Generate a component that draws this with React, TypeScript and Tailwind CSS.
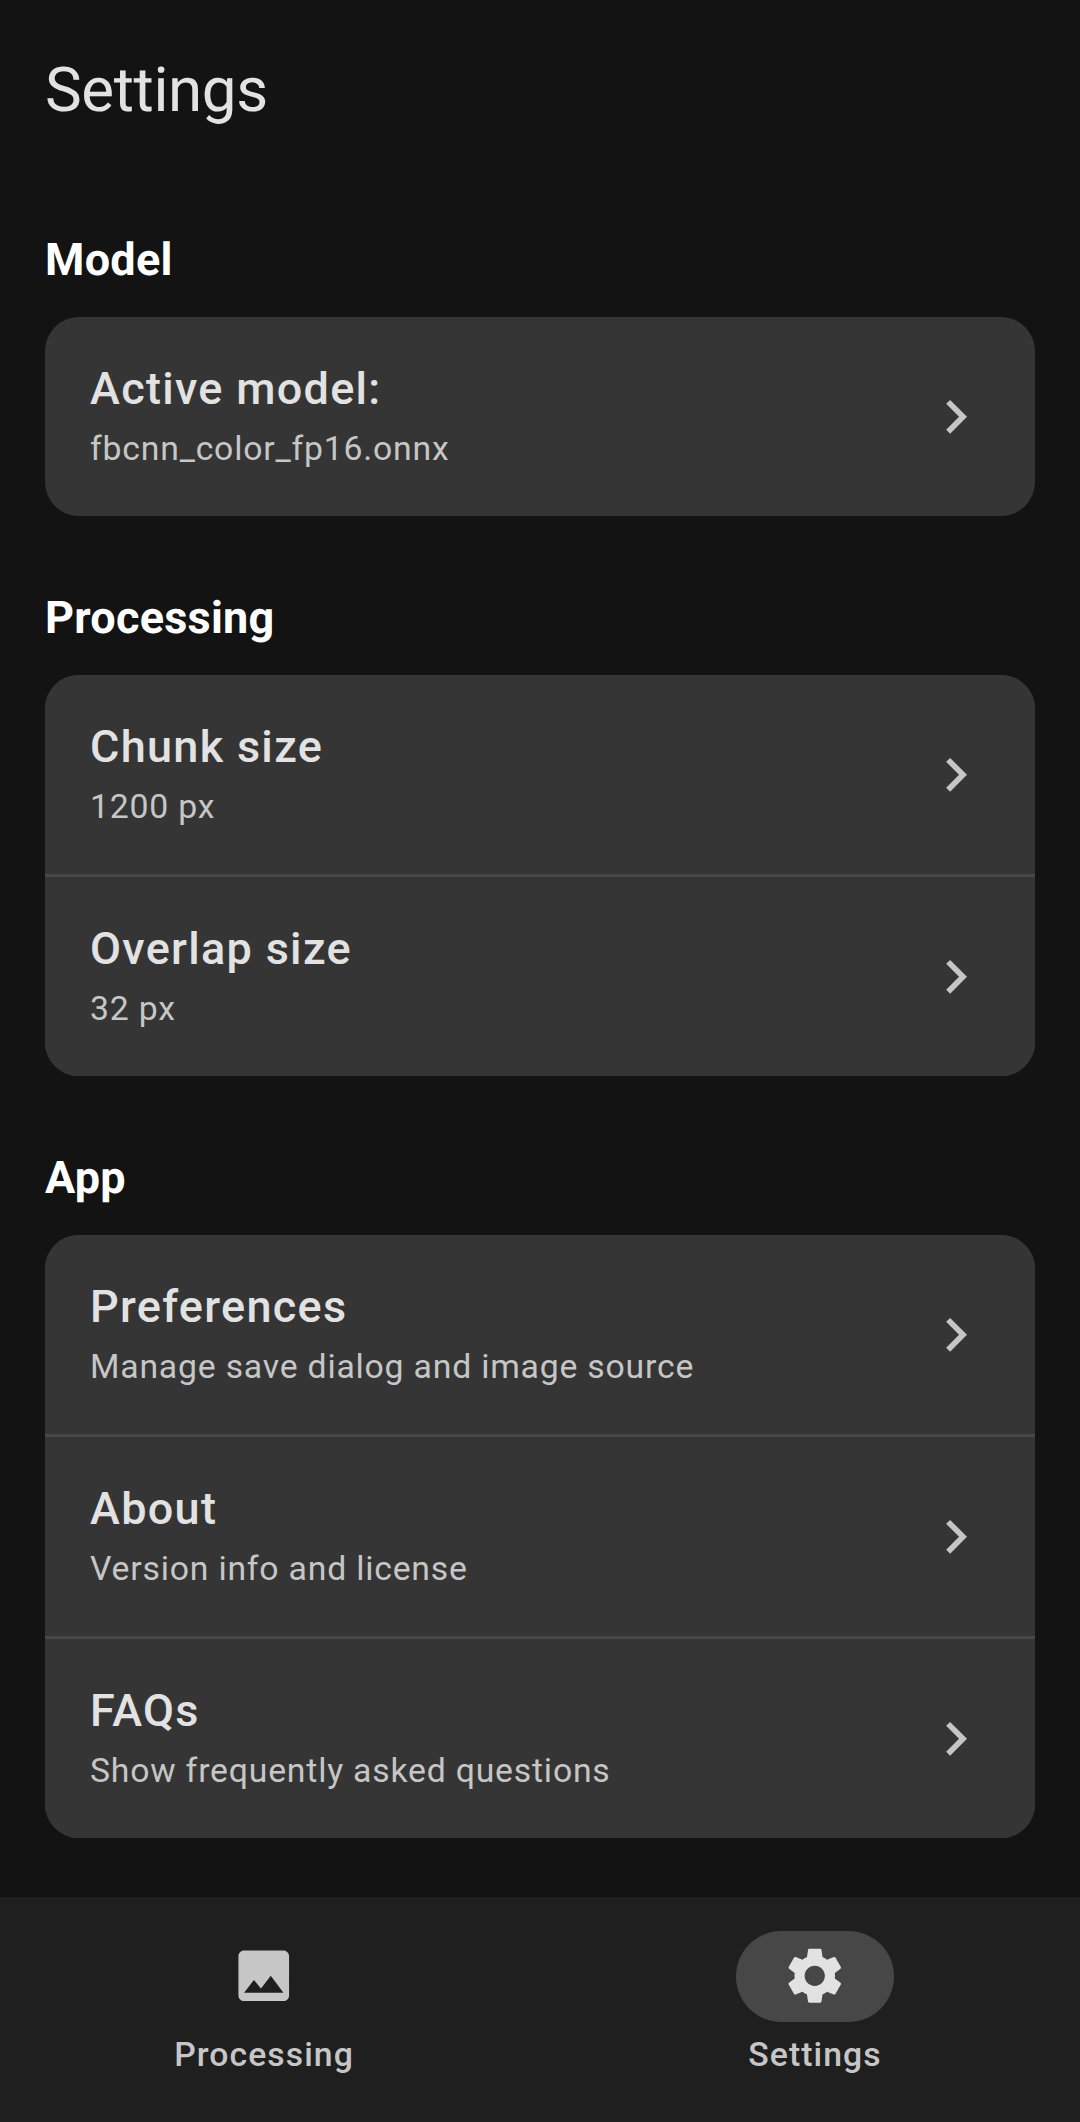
const CHEVRON = "M10 6 8.59 7.41 13.17 12l-4.58 4.59L10 18l6-6z";
const IMAGE = "M21 19V5c0-1.1-.9-2-2-2H5c-1.1 0-2 .9-2 2v14c0 1.1.9 2 2 2h14c1.1 0 2-.9 2-2zM8.5 13.5l2.5 3.01L14.5 12l4.5 6H5l3.5-4.5z";
const GEAR = "M19.14 12.94c.04-.3.06-.61.06-.94 0-.32-.02-.64-.07-.94l2.03-1.58c.18-.14.23-.41.12-.61l-1.92-3.32c-.12-.22-.37-.29-.59-.22l-2.39.96c-.5-.38-1.03-.7-1.62-.94l-.36-2.54c-.04-.24-.24-.41-.48-.41h-3.84c-.24 0-.43.17-.47.41l-.36 2.54c-.59.24-1.13.57-1.62.94l-2.39-.96c-.22-.08-.47 0-.59.22L2.74 8.87c-.12.21-.08.47.12.61l2.03 1.58c-.05.3-.09.63-.09.94s.02.64.07.94l-2.03 1.58c-.18.14-.23.41-.12.61l1.92 3.32c.12.22.37.29.59.22l2.39-.96c.5.38 1.03.7 1.62.94l.36 2.54c.05.24.24.41.48.41h3.84c.24 0 .44-.17.47-.41l.36-2.54c.59-.24 1.13-.56 1.62-.94l2.39.96c.22.08.47 0 .59-.22l1.92-3.32c.12-.22.07-.47-.12-.61l-2.01-1.58zM12 15.6c-1.98 0-3.6-1.62-3.6-3.6s1.62-3.6 3.6-3.6 3.6 1.62 3.6 3.6-1.62 3.6-3.6 3.6z";

function Icon({ d, className }: { d: string; className: string }) {
  return (
    <svg viewBox="0 0 24 24" fill="currentColor" className={className}>
      <path d={d} />
    </svg>
  );
}

function Section({ title, rows }: { title: string; rows: [string, string][] }) {
  return (
    <section>
      <h2 className="mb-[27px] h-[60px] text-[45px] leading-[60px] font-bold tracking-[0.25px] text-white">{title}</h2>
      <div className="flex flex-col gap-[3px] overflow-hidden rounded-[34px] bg-[#474747]">
        {rows.map(([label, detail]) => (
          <button key={label} className="flex h-[199px] w-full items-center justify-between bg-[#353535] pr-[46px] pl-[45px] text-left">
            <span className="flex flex-col">
              <span className="text-[45px] leading-[64px] font-medium tracking-[1.3px] text-[#e2e2e2]">{label}</span>
              <span className="text-[33.75px] leading-[56px] tracking-[0.8px] text-[#c6c6c6]">{detail}</span>
            </span>
            <Icon d={CHEVRON} className="size-[67.5px] text-[#c6c6c6]" />
          </button>
        ))}
      </div>
    </section>
  );
}

export default function App() {
  return (
    <div className="flex h-[2122px] w-[1080px] flex-col bg-[#131313] font-['Roboto',sans-serif] [text-rendering:geometricPrecision]">
      <main className="flex flex-1 flex-col gap-[72px] px-[45px] pt-[46px]">
        <h1 className="mb-[22px] h-[90px] text-[61.875px] leading-[90px] tracking-[-0.4px] text-[#e2e2e2]">Settings</h1>
        <Section title="Model" rows={[["Active model:", "fbcnn_color_fp16.onnx"]]} />
        <Section title="Processing" rows={[["Chunk size", "1200 px"], ["Overlap size", "32 px"]]} />
        <Section title="App" rows={[["Preferences", "Manage save dialog and image source"], ["About", "Version info and license"], ["FAQs", "Show frequently asked questions"]]} />
      </main>
      <nav className="flex h-[225px] shrink-0 gap-[23px] bg-[#1f1f1f] pt-[34px] text-[33.75px] font-medium tracking-[1.05px] text-[#c6c6c6]">
        <button className="flex w-[528px] flex-col items-center">
          <span className="flex h-[91px] w-[158px] items-center justify-center rounded-full pb-px"><Icon d={IMAGE} className="size-[67.5px]" /></span>
          <span className="mt-[10px] leading-[45px]">Processing</span>
        </button>
        <button className="flex w-[528px] flex-col items-center">
          <span className="flex h-[91px] w-[158px] items-center justify-center rounded-full bg-[#474747] pb-px"><Icon d={GEAR} className="size-[67.5px] text-[#e2e2e2]" /></span>
          <span className="mt-[10px] leading-[45px]">Settings</span>
        </button>
      </nav>
    </div>
  );
}
